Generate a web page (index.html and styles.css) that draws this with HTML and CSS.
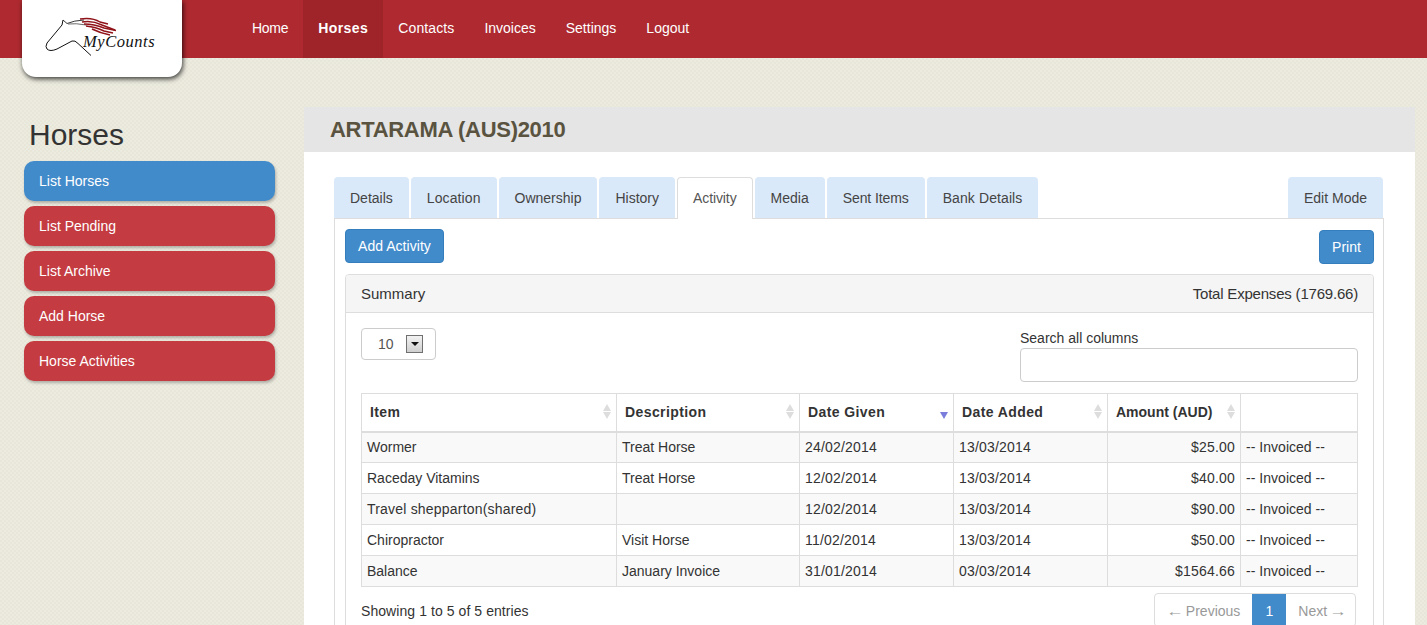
FILE: index.html
```html
<!DOCTYPE html>
<html lang="en">
<head>
  <meta charset="UTF-8">
  <meta name="viewport" content="width=device-width, initial-scale=1">
  <title>MyCounts - Horses</title>
  <link rel="stylesheet" href="styles.css">
</head>
<body>

<header class="topbar">
  <a href="#" class="logo">
    <svg width="160" height="77" viewBox="22 0 160 77">
      <!-- horse head -->
      <path d="M63 20 L62 25 L47 43 Q45 47 47 49 Q50 52 57 49 L72 41 Q75 40 78 43.500 L91 55.500" fill="none" stroke="#111" stroke-width="1"/>
      <path d="M63 20 L67 23.500 Q74 20.500 84 20" fill="none" stroke="#222" stroke-width="0.9"/>
      <path d="M68 24 Q76 23 86 25" fill="none" stroke="#444" stroke-width="0.8"/>
      <!-- mane -->
      <g fill="none" stroke="#8f1319" stroke-width="1.400">
        <path d="M80 19 Q92 17 100 22 L108 24"/>
        <path d="M82 22 Q92 20 102 25 L115 30"/>
        <path d="M84 24 Q94 24 104 28 L116 30.500"/>
        <path d="M86 26 Q96 27 104 31 L113 33"/>
        <path d="M92 29 Q100 33 110 35"/>
      </g>
      <text x="83" y="46.500" class="logo-text">MyCounts</text>
    </svg>
  </a>
  <nav class="menu">
    <a href="#">Home</a>
    <a href="#" class="active">Horses</a>
    <a href="#">Contacts</a>
    <a href="#">Invoices</a>
    <a href="#">Settings</a>
    <a href="#">Logout</a>
  </nav>
</header>

<div class="wrap">
  <aside class="sidebar">
    <h1>Horses</h1>
    <a href="#" class="side-link current">List Horses</a>
    <a href="#" class="side-link">List Pending</a>
    <a href="#" class="side-link">List Archive</a>
    <a href="#" class="side-link">Add Horse</a>
    <a href="#" class="side-link">Horse Activities</a>
  </aside>

  <main class="content">
    <h2 class="content-title">ARTARAMA (AUS)2010</h2>
    <div class="content-body">

      <ul class="tabs">
        <li><a href="#">Details</a></li>
        <li class="loose"><a href="#">Location</a></li>
        <li><a href="#">Ownership</a></li>
        <li><a href="#">History</a></li>
        <li class="active tight"><a href="#">Activity</a></li>
        <li><a href="#">Media</a></li>
        <li class="tight"><a href="#">Sent Items</a></li>
        <li class="loose"><a href="#">Bank Details</a></li>
        <li class="edit"><a href="#">Edit Mode</a></li>
      </ul>

      <div class="tab-box">
        <div class="toolbar">
          <a href="#" class="btn">Add Activity</a>
          <a href="#" class="btn print">Print</a>
        </div>

        <section class="panel">
          <div class="panel-head">
            <span>Summary</span>
            <span class="total">Total Expenses (1769.66)</span>
          </div>
          <div class="panel-body">
            <div class="filters">
              <div class="page-size">
                <span>10</span>
                <span class="drop"></span>
              </div>
              <label class="search">
                Search all columns
                <input type="text">
              </label>
            </div>

            <table class="grid">
              <colgroup>
                <col class="c1"><col class="c2"><col class="c3"><col class="c4"><col class="c5"><col class="c6">
              </colgroup>
              <thead>
                <tr>
                  <th class="sort">Item</th>
                  <th class="sort">Description</th>
                  <th class="sort-desc">Date Given</th>
                  <th class="sort">Date Added</th>
                  <th class="sort">Amount (AUD)</th>
                  <th></th>
                </tr>
              </thead>
              <tbody>
                <tr><td>Wormer</td><td>Treat Horse</td><td>24/02/2014</td><td>13/03/2014</td><td class="num">$25.00</td><td>-- Invoiced --</td></tr>
                <tr><td>Raceday Vitamins</td><td>Treat Horse</td><td>12/02/2014</td><td>13/03/2014</td><td class="num">$40.00</td><td>-- Invoiced --</td></tr>
                <tr><td class="wide">Travel shepparton(shared)</td><td></td><td>12/02/2014</td><td>13/03/2014</td><td class="num">$90.00</td><td>-- Invoiced --</td></tr>
                <tr><td>Chiropractor</td><td>Visit Horse</td><td>11/02/2014</td><td>13/03/2014</td><td class="num">$50.00</td><td>-- Invoiced --</td></tr>
                <tr><td>Balance</td><td>January Invoice</td><td>31/01/2014</td><td>03/03/2014</td><td class="num">$1564.66</td><td>-- Invoiced --</td></tr>
              </tbody>
            </table>

            <div class="table-foot">
              <span>Showing 1 to 5 of 5 entries</span>
              <div class="pager">
                <a href="#"><span class="arrow">&larr;</span> Previous</a>
                <a href="#" class="on">1</a>
                <a href="#">Next <span class="arrow">&rarr;</span></a>
              </div>
            </div>
          </div>
        </section>
      </div>

    </div>
  </main>
</div>

</body>
</html>
```

FILE: styles.css
```css
* { box-sizing: border-box; }
html, body {
  height: 100%;
  overflow: hidden;
}
body {
  margin: 0;
  font-family: "Liberation Sans", Arial, sans-serif;
  font-size: 14px;
  color: #333;
  background: repeating-conic-gradient(#ecebe0 0 25%, #e8e6d9 0 50%) 0 0 / 4px 4px;
}
a { text-decoration: none; color: inherit; }

/* top bar */
.topbar {
  position: relative;
  display: flex;
  height: 58px;
  padding-left: 237px;
  background: #ae2a30;
}
.logo {
  position: absolute;
  top: 0;
  left: 22px;
  width: 160px;
  height: 77px;
  background: #fff;
  border-radius: 0 0 14px 14px;
  box-shadow: 1px 2px 5px rgba(0,0,0,0.75);
}
.logo svg { display: block; }
.logo-text {
  font-family: "Liberation Serif", serif;
  font-style: italic;
  font-size: 16.500px;
  letter-spacing: 0.55px;
  fill: #111;
}
.menu { display: flex; }
.menu a {
  padding: 0 15px;
  line-height: 57px;
  color: #fff;
}
.menu a:first-child { letter-spacing: -0.3px; }
.menu a:nth-child(3) { letter-spacing: 0.1px; }
.menu a.active {
  background: #9f2429;
  font-weight: bold;
  letter-spacing: 0.45px;
}

/* layout */
.wrap {
  display: flex;
  align-items: flex-start;
  padding: 49px 12px 0 24px;
}
.sidebar {
  flex: none;
  width: 251px;
  margin-right: 29px;
}
.sidebar h1 {
  margin: 11px 0 10px 5px;
  font-size: 30px;
  font-weight: normal;
  line-height: 33px;
}
.side-link {
  display: block;
  height: 40px;
  margin-bottom: 5px;
  padding-left: 15px;
  line-height: 40px;
  color: #fff;
  background: #c43c41;
  border-radius: 10px;
  box-shadow: 1px 2px 3px rgba(0,0,0,0.25);
}
.side-link.current { background: #428bca; }

.content {
  flex: 1;
  min-width: 0;
  background: #fff;
  min-height: 600px;
}
.content-title {
  margin: 0;
  height: 45px;
  padding-left: 26px;
  font-size: 22px;
  letter-spacing: -0.3px;
  line-height: 45px;
  color: #5a5340;
  background: #e5e5e5;
}
.content-body { padding: 25px 31px 0 30px; }

/* tabs */
.tabs {
  display: flex;
  margin: 0;
  padding: 0 1px 0 0;
  list-style: none;
}
.tabs li {
  margin-right: 2px;
}
.tabs .loose { letter-spacing: 0.1px; }
.tabs .tight { letter-spacing: -0.1px; }
.tabs a {
  display: block;
  height: 41px;
  padding: 0 15px;
  line-height: 41px;
  color: #444;
  background: #dae9f9;
  border: 1px solid #dae9f9;
  border-bottom: 0;
  border-radius: 4px 4px 0 0;
}
.tabs .active {
  position: relative;
  margin-bottom: -1px;
}
.tabs .active a {
  height: 42px;
  color: #555;
  background: #fff;
  border-color: #ddd;
}
.tabs .edit {
  margin: 0 0 0 auto;
}

.tab-box {
  padding: 10px 9px 0 10px;
  border: 1px solid #ddd;
  border-bottom: 0;
}
.toolbar {
  display: flex;
  justify-content: space-between;
  align-items: flex-start;
  height: 35px;
  margin-bottom: 10px;
}
.btn {
  display: block;
  height: 34px;
  padding: 0 12px;
  line-height: 33px;
  letter-spacing: 0.04px;
  color: #fff;
  background: #428bca;
  border: 1px solid #357ebd;
  border-radius: 4px;
}
.btn.print { margin-top: 1px; }

/* summary panel */
.panel {
  border: 1px solid #ddd;
  border-radius: 4px;
}
.panel-head {
  display: flex;
  justify-content: space-between;
  height: 38px;
  padding: 0 15px;
  font-size: 15px;
  line-height: 37px;
  background: #f5f5f5;
  border-bottom: 1px solid #ddd;
  border-radius: 3px 3px 0 0;
}
.total { letter-spacing: -0.2px; }
.panel-body { padding: 15px 15px 0; }

.filters {
  display: flex;
  justify-content: space-between;
  align-items: flex-start;
  height: 54px;
  margin-bottom: 11px;
}
.page-size {
  display: flex;
  align-items: center;
  width: 75px;
  height: 32px;
  padding-left: 16px;
  border: 1px solid #ccc;
  border-radius: 4px;
}
.page-size span:first-child { width: 28px; color: #555; }
.drop {
  position: relative;
  width: 17px;
  height: 18px;
  background: linear-gradient(#f2f2f2, #cfcfcf);
  border: 1px solid #707070;
}
.drop::after {
  content: "";
  position: absolute;
  top: 6px;
  left: 4px;
  border: 4px solid transparent;
  border-top-color: #111;
  border-bottom: 0;
}
.search {
  display: block;
  width: 338px;
  line-height: 20px;
}
.search input {
  display: block;
  width: 100%;
  height: 34px;
  border: 1px solid #ccc;
  border-radius: 4px;
  background: #fff;
}

/* table */
.grid {
  width: 996px;
  table-layout: fixed;
  border-collapse: collapse;
}
.c1 { width: 255px; }
.c2 { width: 183px; }
.c3 { width: 154px; }
.c4 { width: 154px; }
.c5 { width: 133px; }
.c6 { width: 117px; }
.grid th {
  position: relative;
  height: 38px;
  padding: 0 8px;
  text-align: left;
  letter-spacing: 0.4px;
  border: 1px solid #ddd;
  border-bottom-width: 2px;
}
.grid th:nth-child(5) { letter-spacing: 0; }
.grid td {
  height: 31px;
  padding: 0 5px;
  border: 1px solid #ddd;
}
.grid td:nth-child(3),
.grid td:nth-child(4),
.grid td.num,
.grid td.wide { letter-spacing: 0.2px; }
.grid td:last-child { letter-spacing: 0.03px; }
.grid tbody tr:nth-child(odd) { background: #f9f9f9; }
.grid td.num { text-align: right; }

.sort::before,
.sort::after,
.sort-desc::after {
  content: "";
  position: absolute;
  right: 5px;
  border-left: 4px solid transparent;
  border-right: 4px solid transparent;
}
.sort::before {
  top: 10px;
  border-bottom: 7px solid #ddd;
}
.sort::after {
  top: 18px;
  border-top: 7px solid #ddd;
}
.sort-desc::after {
  top: 18px;
  border-top: 7px solid #7a7ddb;
}

.table-foot {
  display: flex;
  justify-content: space-between;
  padding: 6px 2px 0 0;
}
.table-foot > span {
  line-height: 36px;
  letter-spacing: 0.07px;
}
.pager {
  display: flex;
  height: 34px;
  color: #999;
  border: 1px solid #ddd;
  border-radius: 4px;
}
.pager a {
  padding: 0 12px;
  line-height: 34px;
}
.pager a:first-child { padding-left: 13px; }
.pager a:last-child { padding-right: 10px; }
.pager .arrow {
  display: inline-block;
  width: 14px;
  font-size: 14px;
  line-height: 1;
  transform: scaleX(1.25);
}
.pager a.on {
  width: 34px;
  padding: 0;
  text-align: center;
  color: #fff;
  background: #428bca;
}
```
